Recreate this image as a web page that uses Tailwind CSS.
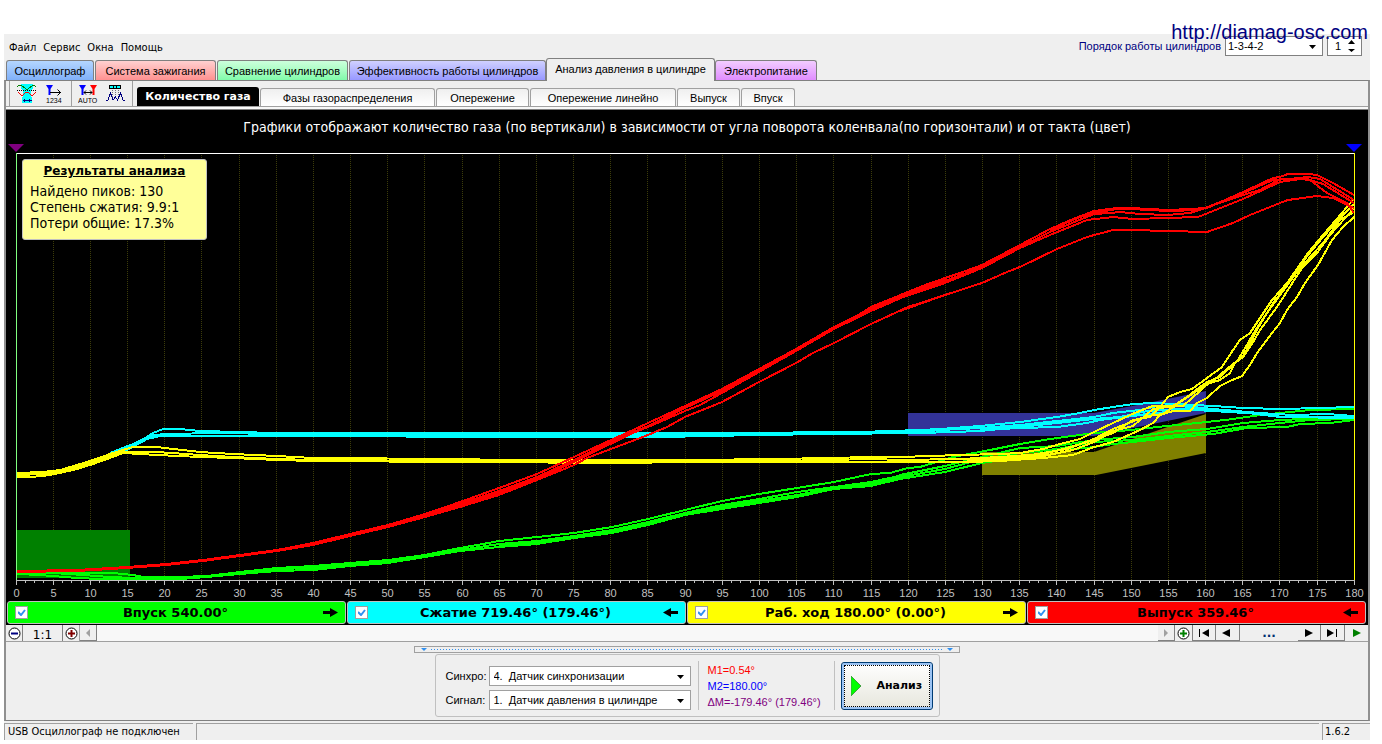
<!DOCTYPE html>
<html lang="ru">
<head>
<meta charset="utf-8">
<title>Осциллограф</title>
<script src="https://cdn.jsdelivr.net/npm/@tailwindcss/browser@4"></script>
</head>
<body class="relative bg-white pt-[34px] font-['Liberation_Sans',sans-serif] text-[11px] leading-4 text-black">
<a href="http://diamag-osc.com" class="absolute top-5 right-[14px] z-10 text-[20px] leading-6 text-[#000080]">http://diamag-osc.com</a>
<div class="mr-3 ml-1 bg-[#efefef]">

  <header class="flex h-6 items-center justify-between pr-2 pl-[5px]">
    <nav class="flex gap-[7px] pt-[3px] font-['DejaVu_Sans_Condensed','DejaVu_Sans',sans-serif]">
      <button>Файл</button><button>Сервис</button><button>Окна</button><button>Помощь</button>
    </nav>
    <div class="flex items-center gap-1">
      <label for="order" class="text-[#000080]">Порядок работы цилиндров</label>
      <div class="relative h-5 w-[98px] border border-[#808080] bg-white">
        <select id="order" class="h-full w-full appearance-none pl-[2px] leading-4"><option>1-3-4-2</option></select>
        <svg class="absolute top-2 right-1.5" width="7" height="4" viewBox="0 0 7 4"><path d="M0 0h7L3.500 4z"/></svg>
      </div>
      <div class="relative h-5 w-[35px] border border-[#808080] bg-white">
        <input aria-label="Номер цилиндра" value="1" class="h-full w-5 pl-[7px]">
        <svg class="absolute top-[3px] right-1.5" width="7" height="12" viewBox="0 0 7 12"><path d="M0 4h7L3.500 0zM0 9h7L3.500 12z"/></svg>
      </div>
    </div>
  </header>

  <nav class="flex h-[22px] items-end pl-[2px]">
    <button class="mr-px h-5 w-[88px] rounded-t-[3px] border border-b-0 border-[#808080] bg-linear-to-b from-[#b4d6ff] to-[#80b0f8]">Осциллограф</button>
    <button class="mr-px h-5 w-[121px] rounded-t-[3px] border border-b-0 border-[#808080] bg-linear-to-b from-[#ffd0d0] to-[#ff9090]">Система зажигания</button>
    <button class="mr-px h-5 w-[131px] rounded-t-[3px] border border-b-0 border-[#808080] bg-linear-to-b from-[#ccffdc] to-[#80fbaa]">Сравнение цилиндров</button>
    <button class="h-5 w-[197px] rounded-t-[3px] border border-b-0 border-[#808080] bg-linear-to-b from-[#d0d0ff] to-[#9898ff]">Эффективность работы цилиндров</button>
    <button class="z-10 -mb-px h-[23px] w-[169px] rounded-t-[3px] border border-b-0 border-[#808080] bg-[#efefef] pb-0.5">Анализ давления в цилиндре</button>
    <button class="h-5 w-[102px] rounded-t-[3px] border border-b-0 border-[#808080] bg-linear-to-b from-[#f2ccff] to-[#e08cff]">Электропитание</button>
  </nav>

  <main class="border-x-2 border-t border-b border-x-[#909090] border-y-[#808080]">
    <div class="flex h-[26px] items-end border-b border-[#a0a0a0] pl-[3px]">
      <div class="mr-1.5 flex h-full items-center gap-2 border-l border-[#a0a0a0] pl-[7px]">
        <button aria-label="Фазы"><svg width="20" height="20" viewBox="0 0 20 20" fill="none" shape-rendering="crispEdges"><path fill="#0ff" d="M4 0h12v4l-2 3v12H6V7L4 4z"/><path d="M0 3l2-2h2l5 4h2l5-4h1l2 2" stroke="#008000"/><path d="M0 6.500h19" stroke="#000" stroke-dasharray="1 1"/><path d="M1 8l3 3h2l3-3h2l3 3h2l3-3" stroke="#f00"/><path d="M5.500 13v6M14.500 13v6" stroke="#0ff"/><path d="M6 16.500h9M7.500 15v3M12.500 15v3" stroke="#000080"/></svg></button>
        <button aria-label="Нумерация"><svg width="20" height="20" viewBox="0 0 20 20"><path fill="#00f" d="M1 1h7L5.500 5v6h-2V5z"/><path d="M5 8.500h11M12.500 5.500l3 3-3 3" fill="none" stroke="#000"/><text x="1" y="19" font-size="7">1234</text></svg></button>
      </div>
      <div class="mr-[7px] flex h-full items-center gap-2 border-l border-[#a0a0a0] pl-1.5">
        <button aria-label="Авто"><svg width="20" height="20" viewBox="0 0 20 20"><path fill="#00f" d="M1 1h7L5.500 5v6h-2V5z"/><path fill="#f00" d="M12 1h7l-2.500 4v6h-2V5z"/><path d="M6 8.500h8M8 6.500l-2 2 2 2M12 6.500l2 2-2 2" fill="none" stroke="#000"/><text x="0" y="19" font-size="7">AUTO</text></svg></button>
        <button aria-label="Сигнал"><svg width="19" height="20" viewBox="0 0 19 20" fill="none" shape-rendering="crispEdges"><path fill="#0ff" stroke="#000" d="M3.500 1.500h11v3h-11zM7.500 1v4M10.500 1v4"/><path d="M6.500 6v7M9.500 6v7M12.500 6v7" stroke="#777" stroke-dasharray="1 1"/><path d="M0 17l2-1 2.500-7L7 16l2.500-3 2 3 3-7 2.500 7 2 1" stroke="#000080"/></svg></button>
      </div>
      <div class="flex h-full items-end border-l border-[#a0a0a0] pl-1">
        <button class="mr-px h-[19px] w-[122px] rounded-t-[3px] bg-black font-['DejaVu_Sans',sans-serif] font-bold text-white">Количество газа</button>
        <button class="mr-px h-[18px] w-[175px] rounded-t-[3px] border border-b-0 border-[#a0a0a0] bg-linear-to-b from-[#efefef] to-white">Фазы газораспределения</button>
        <button class="mr-px h-[18px] w-[93px] rounded-t-[3px] border border-b-0 border-[#a0a0a0] bg-linear-to-b from-[#efefef] to-white">Опережение</button>
        <button class="mr-px h-[18px] w-[146px] rounded-t-[3px] border border-b-0 border-[#a0a0a0] bg-linear-to-b from-[#efefef] to-white">Опережение линейно</button>
        <button class="mr-px h-[18px] w-[63px] rounded-t-[3px] border border-b-0 border-[#a0a0a0] bg-linear-to-b from-[#efefef] to-white">Выпуск</button>
        <button class="h-[18px] w-[54px] rounded-t-[3px] border border-b-0 border-[#a0a0a0] bg-linear-to-b from-[#efefef] to-white">Впуск</button>
      </div>
    </div>
    <div class="h-[3px] border-b border-[#808080] bg-[#f8f8f8]"></div>

    <section class="relative bg-black font-['DejaVu_Sans',sans-serif] text-[13px]">
      <h1 class="h-[34px] pt-[9px] text-center font-['DejaVu_Sans_Condensed','DejaVu_Sans',sans-serif] text-[14px] leading-4 text-white">Графики отображают количество газа (по вертикали) в зависимости от угла поворота коленвала(по горизонтали) и от такта (цвет)</h1>
      <svg id="chart" class="block h-auto w-full" viewBox="6 144 1362 456" fill="none">
        <g id="grid" stroke="#3c3c0a" stroke-dasharray="1 1" shape-rendering="crispEdges"></g>
        <path fill="#008000" d="M17 530h113v48H17z"/>
        <path fill="#333399" d="M908 413h186l49-9 63-13v22l-112 23H908z"/>
        <path fill="#808000" d="M982 452h112l112-38v39l-110 22H982z"/>
        <g id="traces" stroke-width="2" stroke-linejoin="round" shape-rendering="crispEdges"></g>
        <g shape-rendering="crispEdges">
          <path stroke="#fff" d="M16 153.500h1338"/>
          <path stroke="#80ff80" d="M16.500 153v428"/>
          <path stroke="#ff0" d="M1354.500 153v428"/>
          <path stroke="#c0c0c0" d="M16 580.500h1339"/>
        </g>
        <path fill="#800080" d="M8 144h16l-8 8z"/>
        <path fill="#00f" d="M1346 144h16l-8 8z"/>
        <g id="ticks" stroke="#c0c0c0" shape-rendering="crispEdges"></g>
        <g id="labels" fill="#c0c0c0" font-family="Liberation Sans" font-size="11" text-anchor="middle"></g>
      </svg>
      <aside class="absolute top-[49px] left-4 h-[81px] w-[185px] rounded-[3px] border border-[#c0c0c0] bg-[#ffff99] px-[7px] pt-[3px]">
        <h2 class="mb-1 text-center text-[12px] leading-4 font-bold underline">Результаты анализа</h2>
        <div class="font-['DejaVu_Sans_Condensed','DejaVu_Sans',sans-serif] text-[14px] leading-4"><p>Найдено пиков: 130</p><p>Степень сжатия: 9.9:1</p><p>Потери общие: 17.3%</p></div>
      </aside>
      <div class="grid h-[25px] grid-cols-4 gap-px py-px pr-[2px] pl-px font-bold">
        <label class="flex items-center justify-between rounded-[3px] border border-[#c0c0c0] bg-[#00ff00] px-[7px]">
          <span class="relative flex"><input type="checkbox" checked class="h-[13px] w-[13px] appearance-none border border-[#a0a0a0] bg-white"><svg class="absolute top-[3px] left-[3px]" width="8" height="7" viewBox="0 0 8 7"><path d="M0 3l3 3 4-5" fill="none" stroke="#3090f0" stroke-width="2"/></svg></span>
          Впуск 540.00°
          <svg width="15" height="9" viewBox="0 0 15 9"><path d="M0 3h7V0l8 4.500L7 9V6H0z"/></svg>
        </label>
        <label class="flex items-center justify-between rounded-[3px] border border-[#c0c0c0] bg-[#00ffff] px-[7px]">
          <span class="relative flex"><input type="checkbox" checked class="h-[13px] w-[13px] appearance-none border border-[#a0a0a0] bg-white"><svg class="absolute top-[3px] left-[3px]" width="8" height="7" viewBox="0 0 8 7"><path d="M0 3l3 3 4-5" fill="none" stroke="#3090f0" stroke-width="2"/></svg></span>
          Сжатие 719.46° (179.46°)
          <svg width="15" height="9" viewBox="0 0 15 9"><path d="M15 3H8V0L0 4.500 8 9V6h7z"/></svg>
        </label>
        <label class="flex items-center justify-between rounded-[3px] border border-[#c0c0c0] bg-[#ffff00] px-[7px]">
          <span class="relative flex"><input type="checkbox" checked class="h-[13px] w-[13px] appearance-none border border-[#a0a0a0] bg-white"><svg class="absolute top-[3px] left-[3px]" width="8" height="7" viewBox="0 0 8 7"><path d="M0 3l3 3 4-5" fill="none" stroke="#3090f0" stroke-width="2"/></svg></span>
          Раб. ход 180.00° (0.00°)
          <svg width="15" height="9" viewBox="0 0 15 9"><path d="M0 3h7V0l8 4.500L7 9V6H0z"/></svg>
        </label>
        <label class="flex items-center justify-between rounded-[3px] border border-[#c0c0c0] bg-[#ff0000] px-[7px]">
          <span class="relative flex"><input type="checkbox" checked class="h-[13px] w-[13px] appearance-none border border-[#a0a0a0] bg-white"><svg class="absolute top-[3px] left-[3px]" width="8" height="7" viewBox="0 0 8 7"><path d="M0 3l3 3 4-5" fill="none" stroke="#3090f0" stroke-width="2"/></svg></span>
          Выпуск 359.46°
          <svg width="15" height="9" viewBox="0 0 15 9"><path d="M15 3H8V0L0 4.500 8 9V6h7z"/></svg>
        </label>
      </div>
    </section>

    <div class="flex h-[17px] border-b border-[#a0a0a0] bg-[#f8f8f8]">
      <button aria-label="Уменьшить" class="grid w-[17px] place-items-center border-r border-[#808080] bg-[#efefef]"><svg width="13" height="13" viewBox="0 0 13 13"><circle cx="6.500" cy="6.500" r="5.500" fill="#fff" stroke="#000"/><path d="M3 5.500h7v2H3z" fill="#000080"/></svg></button>
      <button class="w-10 border-r border-[#808080] bg-[#efefef] pt-0.5 font-['DejaVu_Sans',sans-serif] text-[12px]">1:1</button>
      <button aria-label="Увеличить" class="grid w-[17px] place-items-center border-r border-[#a0a0a0] bg-[#efefef]"><svg width="13" height="13" viewBox="0 0 13 13"><circle cx="6.500" cy="6.500" r="5.500" fill="#fff" stroke="#000"/><path d="M3 5.500h2.500V3h2v2.500H10v2H7.500V10h-2V7.500H3z" fill="#800000"/></svg></button>
      <button aria-label="Влево" class="grid w-[17px] place-items-center border-r border-b border-[#808080] bg-[#efefef]"><svg width="5" height="8" viewBox="0 0 5 8"><path d="M4 0v8L0 4z" fill="#a0a0a0"/></svg></button>
      <div class="flex-1"></div>
      <button aria-label="Вправо" class="grid w-[17px] place-items-center border-r border-b border-[#808080] bg-[#efefef]"><svg width="5" height="8" viewBox="0 0 5 8"><path d="M0 0v8l4-4z" fill="#a0a0a0"/></svg></button>
      <button aria-label="Добавить" class="grid w-[18px] place-items-center border-r border-[#808080] bg-[#efefef]"><svg width="13" height="13" viewBox="0 0 13 13"><circle cx="6.500" cy="6.500" r="5.500" fill="#fff" stroke="#000"/><path d="M3 5.500h2.500V3h2v2.500H10v2H7.500V10h-2V7.500H3z" fill="#008000"/></svg></button>
      <button aria-label="В начало" class="grid w-[23px] place-items-center border-r border-b border-[#808080] bg-[#efefef]"><svg width="11" height="8" viewBox="0 0 11 8"><path d="M0 0h1v8H0zM10 0v8L3 4z"/></svg></button>
      <button aria-label="Назад" class="grid w-6 place-items-center border-r border-b border-[#808080] bg-[#efefef] pr-1"><svg width="8" height="8" viewBox="0 0 8 8"><path d="M8 0v8L0 4z"/></svg></button>
      <button class="w-[58px] bg-[#efefef] font-['DejaVu_Sans',sans-serif] text-[12px] font-bold text-[#003070]">...</button>
      <button aria-label="Вперёд" class="grid w-[23px] place-items-center border-r border-b border-[#808080] bg-[#efefef]"><svg width="8" height="8" viewBox="0 0 8 8"><path d="M0 0v8l8-4z"/></svg></button>
      <button aria-label="В конец" class="grid w-6 place-items-center border-r border-b border-[#808080] bg-[#efefef]"><svg width="11" height="8" viewBox="0 0 11 8"><path d="M9 0h1v8H9zM0 0v8l7-4z"/></svg></button>
      <button aria-label="Пуск" class="grid w-[23px] place-items-center bg-[#efefef]"><svg width="8" height="8" viewBox="0 0 8 8"><path d="M0 0v8l8-4z" fill="#008000"/></svg></button>
    </div>

    <div class="flex flex-col items-center pt-1 pb-[3px]">
      <div class="flex h-[7px] w-[546px] items-center gap-1 border border-[#a0a0a0] px-1.5">
        <svg width="6" height="3" viewBox="0 0 6 3"><path d="M0 0h6L3 3z" fill="#3090f0"/></svg>
        <svg class="h-px flex-1" shape-rendering="crispEdges"><line x1="0" y1="0.500" x2="100%" y2="0.500" stroke="#3090f0" stroke-dasharray="1 2"/></svg>
        <svg width="6" height="3" viewBox="0 0 6 3"><path d="M0 0h6L3 3z" fill="#3090f0"/></svg>
      </div>
      <form class="mt-px flex h-[63px] w-[505px] items-center rounded-[3px] border border-[#c0c0c0] pl-[10px]">
        <div class="grid grid-cols-[43px_202px] items-center gap-y-1 pt-1">
          <label for="sync">Синхро:</label>
          <div class="relative h-5 border border-[#a0a0a0] bg-white">
            <select id="sync" class="h-full w-full appearance-none pl-1"><option>4.&nbsp; Датчик синхронизации</option></select>
            <svg class="absolute top-2 right-1.5" width="7" height="4" viewBox="0 0 7 4"><path d="M0 0h7L3.500 4z"/></svg>
          </div>
          <label for="signal">Сигнал:</label>
          <div class="relative h-5 border border-[#a0a0a0] bg-white">
            <select id="signal" class="h-full w-full appearance-none pl-1"><option>1.&nbsp; Датчик давления в цилиндре</option></select>
            <svg class="absolute top-2 right-1.5" width="7" height="4" viewBox="0 0 7 4"><path d="M0 0h7L3.500 4z"/></svg>
          </div>
        </div>
        <div class="ml-[7px] w-[137px] border-x border-[#c0c0c0] pt-px pl-[9px] whitespace-nowrap">
          <p class="text-[#ff0000]">M1=0.54°</p><p class="text-[#0000ff]">M2=180.00°</p><p class="text-[#800080]">ΔM=-179.46° (179.46°)</p>
        </div>
        <button type="button" class="ml-1.5 flex h-12 w-[92px] items-center gap-4 rounded-[3px] border border-[#003c74] bg-linear-to-b from-white to-[#e6e6dc] pl-[9px] font-['DejaVu_Sans',sans-serif] font-bold shadow-[inset_0_0_0_2px_#9cc4f4] outline-1 -outline-offset-4 outline-dotted outline-black">
          <svg width="10" height="20" viewBox="0 0 10 20"><path d="M0 0v20l10-10z" fill="#00ff00" stroke="#40a040"/></svg>Анализ
        </button>
      </form>
    </div>
  </main>

  <footer class="mt-[2px] flex h-[17px] gap-[3px] font-['DejaVu_Sans_Condensed','DejaVu_Sans',sans-serif]">
    <div class="w-[189px] border-t border-l border-[#a0a0a0] pl-[3px]">USB Осциллограф не подключен</div>
    <div class="flex-1 border-t border-l border-[#a0a0a0]"></div>
    <div class="w-12 border-t border-l border-[#a0a0a0] pl-[2px]">1.6.2</div>
  </footer>
</div>

<script>
const NS = 'http://www.w3.org/2000/svg';
const add = (id, tag, attrs, text) => {
  const el = document.createElementNS(NS, tag);
  for (const k in attrs) el.setAttribute(k, attrs[k]);
  if (text !== undefined) el.textContent = text;
  document.getElementById(id).append(el);
};
const X = deg => Math.floor(16 + deg * 7.435) + 0.5;
for (let d = 0; d <= 180; d += 1.25) {
  const major = d % 5 === 0;
  add('ticks', 'path', {d: `M${X(d)} 581v${major ? 4 : 2}`});
  if (major) {
    if (d > 0 && d < 180) add('grid', 'path', {d: `M${X(d)} 155V580`});
    add('labels', 'text', {x: X(d), y: 597}, d);
  }
}

// Sections share sub-pixel units: three per pixel, counted from the section's origin.
const L = [0, 400], M = [460, 400], U = [500, 240], R = [900, 340], T = [900, 140];
function trace(color, ...sections) {
  const pts = [];
  for (const [[ox, oy], list] of sections)
    for (const p of list.split(' ')) {
      const [x, y] = p.split(',').map(Number);
      pts.push(`${Math.round(ox + x / 3)},${Math.round(oy + y / 3)}`);
    }
  add('traces', 'polyline', {points: pts.join(' '), stroke: color});
}
const G = '#00ff00', C = '#00ffff', Y = '#ffff00', D = '#ff0000';

trace(G, [L, '50,520 140,517 270,518 340,520 400,526 430,531 540,531 620,528 720,516 830,505 940,498 1050,490 1165,480 1275,465 1380,445'],
  [M, '70,432 118,423 230,410 343,400 455,382 565,358 676,330 787,303 898,283 1010,263 1123,245 1234,222 1290,220 1345,205 1380,200'],
  [R, '100,370 160,350 270,330 360,312 450,298 583,278 694,270 800,258 920,247 1000,238 1060,228 1140,220 1230,210 1362,206']);
trace(G, [L, '50,522 160,520 250,526 330,532 400,535 540,535 620,530 720,520 830,508 940,504 1050,495 1165,487 1275,470 1380,450'],
  [M, '118,432 230,422 343,408 455,390 565,365 676,338 787,316 898,296 1010,277 1123,260 1234,246 1345,222'],
  [R, '0,405 136,378 247,350 361,325 472,317 583,300 700,290 805,277 920,268 1028,250 1140,240 1362,230']);
trace(G, [L, '50,523 120,524 230,534 300,537 540,537 620,532 720,522 830,512 940,509 1050,499 1165,490 1275,472 1380,452'],
  [M, '118,440 230,432 343,415 455,400 565,375 676,346 787,327 898,308 1010,292 1123,268 1234,258 1345,232'],
  [R, '0,418 136,395 247,368 361,350 472,330 560,325 640,312 700,305 805,293 940,283 1040,265 1160,262 1200,252 1290,250 1362,240']);
trace(G, [M, '118,436 230,427 343,412 455,396 565,370 676,341 787,320 898,302 1010,284 1123,264 1234,252 1345,228'],
  [R, '0,411 136,386 247,358 361,340 472,326 583,306 700,299 805,288 920,276 1028,262 1140,248 1230,240 1362,236']);

trace(C, [L, '330,160 400,133 440,112 460,98 490,88 540,88 600,92 720,95 820,98 1380,99'],
  [M, '300,99 600,100 900,99 1100,95 1200,96 1380,90'],
  [R, '120,267 240,258 360,247 470,230 540,220 583,210 640,200 700,192 760,188 830,193 940,197 1030,203 1150,208 1362,202']);
trace(C, [L, '330,160 380,145 440,116 460,106 500,102 650,99 830,102 1380,105'],
  [M, '300,106 600,105 900,103 1100,101 1200,98 1380,96'],
  [R, '120,270 240,264 360,255 470,242 583,230 640,220 720,210 770,198 850,198 940,208 1080,220 1180,225 1280,222 1362,228']);
trace(C, [L, '340,162 380,150 440,118 480,108 650,108 1050,109 1380,110'],
  [M, '120,112 300,110 420,112 600,110 900,106 1100,103 1380,100'],
  [R, '160,275 240,272 300,268 360,265 470,262 560,250 600,240 700,228 740,222 830,212 860,205 1000,213 1140,230 1362,235']);
trace(C, [R, '240,270 360,262 470,250 583,236 660,232 740,214 830,208 940,212 1080,222 1150,232 1362,231']);

trace(Y, [L, '50,219 130,216 180,209 230,196 280,181 330,163 370,150 400,141 470,141 520,148 600,155 700,162 830,169 940,173 1380,177'],
  [M, '120,180 400,181 700,181 950,178 1100,174 1240,171'],
  [R, '0,352 180,344 300,341 360,338 430,327 480,311 540,298 583,275 640,250 690,225 740,205 760,198 820,197 860,170 900,140 920,126 960,112 1000,75 1030,48 1055,0'],
  [T, '1075,563 1120,490 1170,424 1225,345 1270,290 1330,225 1362,192']);
trace(Y, [L, '50,225 130,222 180,215 230,202 280,187 330,168 370,155 470,157 600,164 700,170 830,176 940,180 1380,182'],
  [M, '120,184 400,185 700,184 950,182 1100,180 1240,178'],
  [R, '0,360 180,357 300,352 430,343 500,325 583,300 640,280 700,240 750,230 780,200 805,172 840,157 875,147 920,113 965,80 1000,30 1020,0'],
  [T, '1050,580 1115,480 1160,430 1225,340 1270,285 1340,200 1362,178']);
trace(Y, [L, '50,231 90,231 130,228 180,220 230,208 280,192 330,173 370,160 470,164 600,171 700,175 830,181 940,184 1380,186'],
  [M, '120,186 400,188 460,188 700,186 950,186 1240,185'],
  [R, '0,365 200,365 300,362 430,355 520,345 583,322 640,305 720,270 760,250 780,225 820,213 870,212 890,190 920,175 960,138 990,123 1025,108 1050,75 1070,40 1090,15'],
  [T, '1115,580 1140,548 1160,510 1190,470 1215,430 1255,375 1295,300 1330,262 1362,230']);
trace(Y, [R, '200,360 300,357 430,348 520,330 583,305 640,272 700,258 760,208 800,202 850,197 900,152 920,132 960,120 990,100 1005,70 1030,50 1055,12'],
  [T, '1080,570 1130,500 1180,425 1205,385 1250,340 1290,285 1362,205']);
trace(Y, [R, '360,352 430,340 500,326 583,296 640,268 740,228 790,222 850,180 900,146 940,124 985,84 1015,60 1045,10'],
  [T, '1065,572 1100,520 1140,465 1190,395 1235,345 1270,308 1320,240 1362,215']);

trace(D, [L, '50,514 230,509 380,501 500,492 610,480 720,466 830,450 940,430 1050,403 1165,375 1275,341 1380,306'],
  [M, '118,264 230,223 343,172'], [U, '300,615 400,570 445,549 556,497 667,446 778,387 889,326 1003,262 1080,222 1114,200 1225,155 1336,117'],
  [T, '0,464 75,436 136,414 180,400 247,376 361,314 450,266 520,236 583,214 650,203 694,203 805,210 870,208 920,203 1028,155 1120,115 1140,112 1165,102 1225,102 1252,105 1300,130 1362,165']);
trace(D, [L, '50,517 230,512 380,503 500,494 610,483 720,468 830,454 940,434 1050,407 1165,380 1275,346 1380,313'],
  [M, '118,273 230,230 343,180'], [U, '300,620 400,575 445,557 556,504 667,452 778,392 889,330 1003,267 1114,207 1225,160 1336,122'],
  [T, '0,470 136,423 247,380 361,320 450,275 583,222 630,220 660,217 720,222 800,225 870,220 916,205 1028,165 1080,150 1140,118 1220,118 1270,132 1362,190']);
trace(D, [L, '500,495 720,469 940,434 1050,409 1165,382 1275,350 1380,318'],
  [M, '118,280 230,236 343,186'], [U, '300,628 400,580 445,560 556,512 600,494 667,460 778,396 889,333 1003,268 1114,212 1225,165 1336,125'],
  [T, '0,475 136,428 247,383 361,324 450,285 560,240 640,230 700,237 800,235 895,232 1028,178 1140,125 1200,116 1230,120 1280,160 1340,190 1362,220']);
trace(D, [T, '450,270 540,232 583,220 650,206 694,206 805,212 900,209 1028,160 1120,120 1170,118 1225,112 1260,118 1362,180']);
trace(D, [L, '1050,409 1165,382 1275,351 1380,321'], [M, '118,284 230,241 343,196'],
  [U, '260,655 334,628 430,592 500,560 556,532 667,485 778,427 889,370 940,338 1003,308 1114,252 1225,202 1336,165'],
  [T, '0,512 75,485 136,465 247,430 320,395 361,380 472,327 560,290 640,270 694,270 805,273 920,276 1000,250 1050,225 1140,190 1165,180 1250,168 1300,175 1362,205']);
</script>
</body>
</html>
